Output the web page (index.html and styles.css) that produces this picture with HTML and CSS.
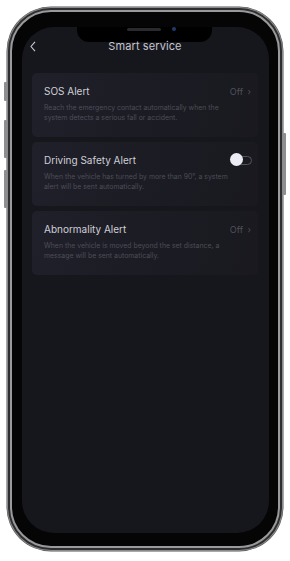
FILE: index.html
```html
<!DOCTYPE html>
<html>
<head>
<meta charset="utf-8">
<link rel="stylesheet" href="styles.css">
</head>
<body>
<div class="phone">
  <span class="btn btn-mute"></span>
  <span class="btn btn-vol1"></span>
  <span class="btn btn-vol2"></span>
  <span class="btn btn-power"></span>
  <div class="rim">
    <div class="bezel">
      <div class="screen">
        <div class="notch"><span class="speaker"></span><span class="camera"></span></div>
        <header class="nav">
          <svg class="back" width="6" height="11" viewBox="0 0 6 11"><path d="M5 0.8 L1 5.5 L5 10.2" fill="none" stroke="#c9c9d2" stroke-width="1.1"/></svg>
          <h1 class="nav-title">Smart service</h1>
        </header>
        <div class="list">
          <div class="card">
            <div class="row">
              <span class="title">SOS Alert</span>
              <span class="value">Off <span class="chev">›</span></span>
            </div>
            <p class="desc">Reach the emergency contact automatically when the system detects a serious fall or accident.</p>
          </div>
          <div class="card">
            <div class="row">
              <span class="title">Driving Safety Alert</span>
              <span class="toggle"><span class="knob"></span></span>
            </div>
            <p class="desc">When the vehicle has turned by more than 90°, a system alert will be sent automatically.</p>
          </div>
          <div class="card">
            <div class="row">
              <span class="title">Abnormality Alert</span>
              <span class="value">Off <span class="chev">›</span></span>
            </div>
            <p class="desc">When the vehicle is moved beyond the set distance, a message will be sent automatically.</p>
          </div>
        </div>
      </div>
    </div>
  </div>
</div>
</body>
</html>
```

FILE: styles.css
```css
html, body {
  margin: 0;
  padding: 0;
  background: #ffffff;
}
body {
  width: 290px;
  height: 561px;
  font-family: "Liberation Sans", Arial, sans-serif;
  overflow: hidden;
}
.phone {
  position: relative;
  box-sizing: border-box;
  width: 276px;
  height: 544px;
  margin: 7px 0 0 7px;
  border-radius: 44px;
  background: #8a8a8c;
  padding: 1px;
  box-shadow: 0 0 0 0.5px #555;
}
.rim {
  box-sizing: border-box;
  height: 100%;
  border-radius: 43px;
  background: #2e2e30;
  padding: 2px;
}
.bezel {
  box-sizing: border-box;
  height: 100%;
  border-radius: 41px;
  background: #050505;
  border: 2px solid #9a9a9c;
  padding: 15px 9px 13px 10px;
}
.screen {
  position: relative;
  box-sizing: border-box;
  height: 100%;
  border-radius: 32px;
  background: #16161d;
  overflow: hidden;
  padding: 0 11px 0 10px;
}
.btn {
  position: absolute;
  width: 3px;
  background: #8e8e90;
  border-radius: 1px;
}
.btn-mute { left: -3px; top: 75px; height: 19px; }
.btn-vol1 { left: -3px; top: 113px; height: 38px; }
.btn-vol2 { left: -3px; top: 163px; height: 38px; }
.btn-power { right: -3px; top: 126px; height: 62px; }
.notch {
  position: absolute;
  top: 0;
  left: 55px;
  width: 135px;
  height: 15px;
  background: #000;
  border-radius: 0 0 12px 12px;
}
.speaker {
  position: absolute;
  left: 50px;
  top: 1px;
  width: 34px;
  height: 3px;
  border-radius: 2px;
  background: #2a2a2e;
}
.camera {
  position: absolute;
  left: 95px;
  top: 0;
  width: 4px;
  height: 4px;
  border-radius: 50%;
  background: #1f3a6e;
}
.nav {
  position: relative;
  height: 14px;
  margin-top: 12px;
  display: flex;
  align-items: center;
  justify-content: center;
}
.back {
  position: absolute;
  left: -2px;
  top: 2px;
}
.nav-title {
  margin: 0;
  font-family: "Inter", "Liberation Sans", sans-serif;
  font-weight: 400;
  font-size: 11px;
  color: #c6c6cf;
  letter-spacing: 0.1px;
}
.list {
  margin-top: 20px;
  display: flex;
  flex-direction: column;
  gap: 5px;
}
.card {
  box-sizing: border-box;
  height: 64px;
  border-radius: 5px;
  background: linear-gradient(100deg, #20202a 0%, #1c1c25 45%, #19191f 100%);
  padding: 11px 6px 0 12px;
}
.row {
  display: flex;
  align-items: center;
  justify-content: space-between;
  height: 14px;
}
.title {
  font-family: "Inter", "Liberation Sans", sans-serif;
  font-size: 10px;
  color: #cfcfd7;
}
.value {
  font-family: "Inter", "Liberation Sans", sans-serif;
  font-size: 9px;
  color: #50505a;
  margin-right: 1px;
}
.chev {
  margin-left: 2px;
}
.toggle {
  position: relative;
  box-sizing: border-box;
  width: 21px;
  height: 9px;
  border: 1px solid #55555e;
  border-radius: 5px;
  margin-right: 0;
}
.knob {
  position: absolute;
  left: -2px;
  top: -3.5px;
  width: 13px;
  height: 13px;
  border-radius: 50%;
  background: #ececf6;
}
.desc {
  margin: 5px 0 0 0;
  font-family: "Inter", "Liberation Sans", sans-serif;
  font-size: 6.9px;
  line-height: 10px;
  color: #4d4d57;
  width: 192px;
}
```
